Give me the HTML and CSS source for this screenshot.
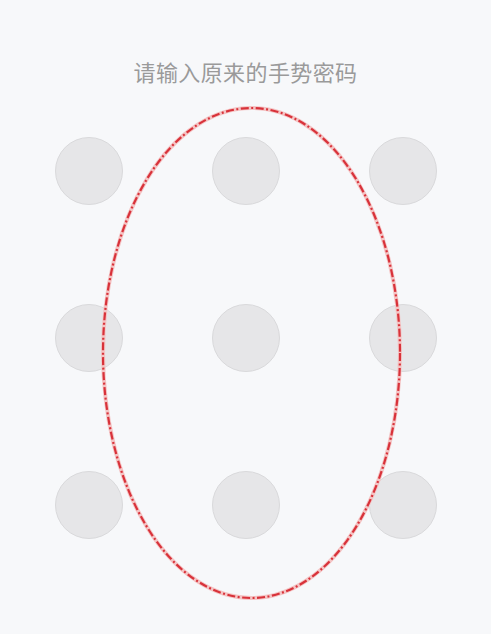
FILE: index.html
```html
<!DOCTYPE html>
<html lang="zh">
<head>
<meta charset="utf-8">
<link rel="stylesheet" href="styles.css">
</head>
<body>
<div class="page">
  <h1 class="title">请输入原来的手势密码</h1>
  <div class="grid">
    <span class="dot"></span><span class="dot"></span><span class="dot"></span>
    <span class="dot"></span><span class="dot"></span><span class="dot"></span>
    <span class="dot"></span><span class="dot"></span><span class="dot"></span>
  </div>
  <svg class="mark" width="491" height="634" viewBox="0 0 491 634">
    <ellipse cx="251.5" cy="353" rx="148.5" ry="245" fill="none" stroke="#f4c4c4" stroke-width="4"/>
    <ellipse cx="251.5" cy="353" rx="148.5" ry="245" fill="none" stroke="#d8323a" stroke-width="2.2" stroke-dasharray="8 2.5 2 2.5"/>
  </svg>
</div>
</body>
</html>
```
FILE: styles.css
```css
html, body {
  margin: 0;
  padding: 0;
  background: #f7f8fa;
}
.page {
  position: relative;
  width: 491px;
  height: 634px;
  overflow: hidden;
  font-family: "Noto Sans CJK SC", "Noto Sans", sans-serif;
}
.title {
  margin: 0;
  padding-top: 56px;
  height: 77px;
  box-sizing: border-box;
  text-align: center;
  font-size: 22px;
  letter-spacing: 0.4px;
  font-weight: normal;
  line-height: 30px;
  color: #9a9a9a;
}
.grid {
  display: grid;
  grid-template-columns: repeat(3, 68px);
  grid-auto-rows: 68px;
  column-gap: 89px;
  row-gap: 99px;
  justify-content: center;
  padding-top: 60px;
}
.dot {
  display: block;
  width: 68px;
  height: 68px;
  box-sizing: border-box;
  border-radius: 50%;
  background: #e6e6e8;
  border: 1px solid #d9d9db;
}
.mark {
  position: absolute;
  left: 0;
  top: 0;
  pointer-events: none;
}
```
